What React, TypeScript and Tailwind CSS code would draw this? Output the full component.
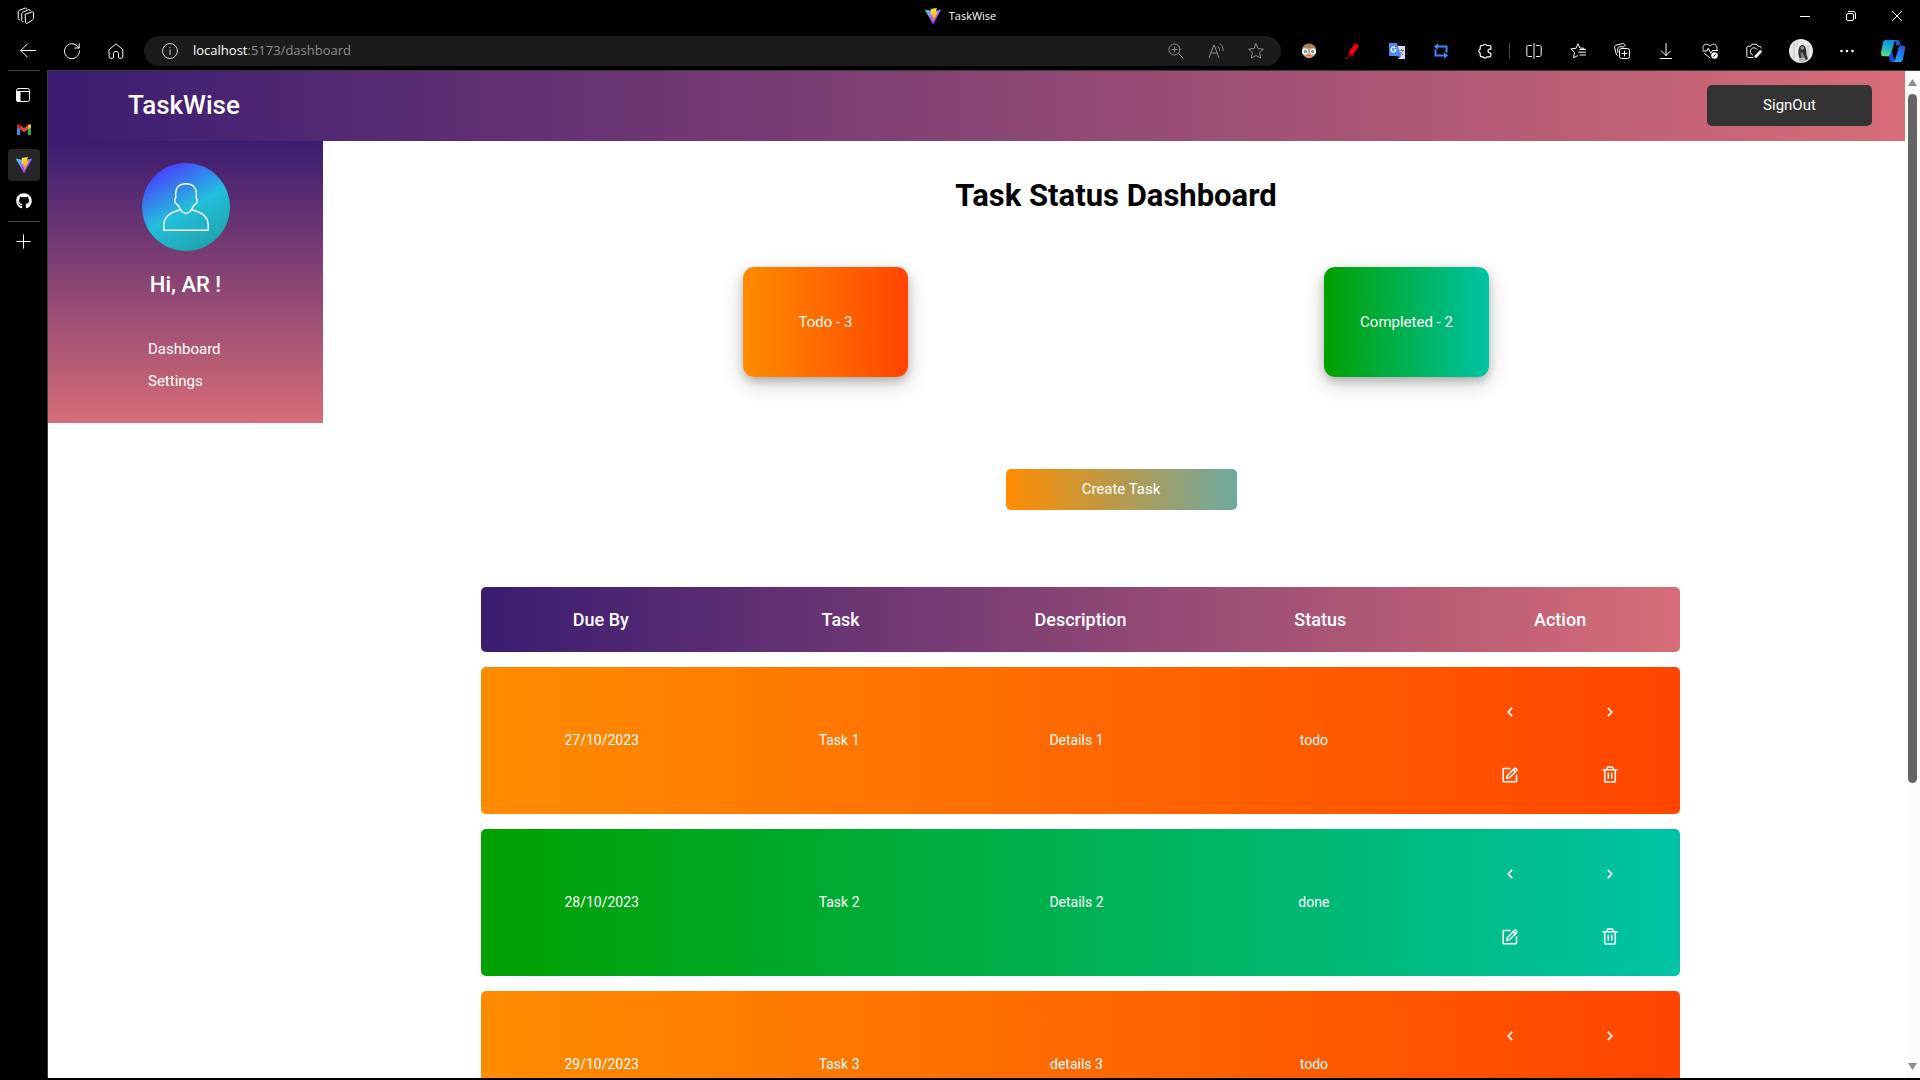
import React from "react";
import type { ReactNode } from "react";
import { FaGithub } from "react-icons/fa";

/* ---------- icons ---------- */

type LineIconProps = { size?: number; children: ReactNode; className?: string; width?: number };

function LineIcon({ size = 16, children, className = "", width = 1 }: LineIconProps) {
  return (
    <svg
      width={size}
      height={size}
      viewBox={`0 0 ${size} ${size}`}
      fill="none"
      stroke="currentColor"
      strokeWidth={width}
      strokeLinecap="round"
      strokeLinejoin="round"
      className={className}
      aria-hidden="true"
    >
      {children}
    </svg>
  );
}

function ViteLogo({ id }: { id: string }) {
  return (
    <svg width="16" height="16" viewBox="0 0 256 257" aria-hidden="true">
      <defs>
        <linearGradient id={`${id}-a`} x1="-.8%" x2="57.6%" y1="7.7%" y2="78.4%">
          <stop offset="0%" stopColor="#41D1FF" />
          <stop offset="100%" stopColor="#BD34FE" />
        </linearGradient>
        <linearGradient id={`${id}-b`} x1="43.4%" x2="50.3%" y1="2.2%" y2="89%">
          <stop offset="0%" stopColor="#FFEA83" />
          <stop offset="8.3%" stopColor="#FFDD35" />
          <stop offset="100%" stopColor="#FFA800" />
        </linearGradient>
      </defs>
      <path
        fill={`url(#${id}-a)`}
        d="M255.153 37.938L134.897 252.976c-2.483 4.44-8.862 4.466-11.382.048L.875 37.958c-2.746-4.814 1.371-10.646 6.827-9.67l120.385 21.517a6.537 6.537 0 0 0 2.322-.004l117.867-21.483c5.438-.991 9.574 4.796 6.877 9.62Z"
      />
      <path
        fill={`url(#${id}-b)`}
        d="M185.432.063L96.44 17.501a3.268 3.268 0 0 0-2.634 3.014l-5.474 92.456a3.268 3.268 0 0 0 3.997 3.378l24.777-5.718c2.318-.535 4.413 1.507 3.936 3.838l-7.361 36.047c-.495 2.426 1.782 4.5 4.151 3.78l15.304-4.649c2.372-.72 4.652 1.36 4.15 3.788l-11.698 56.621c-.732 3.542 3.979 5.473 5.943 2.437l1.313-2.028l72.516-144.72c1.215-2.423-.88-5.186-3.54-4.672l-25.505 4.922c-2.396.462-4.435-1.77-3.759-4.114l16.646-57.705c.677-2.35-1.37-4.583-3.769-4.113Z"
      />
    </svg>
  );
}

function WorkspacesIcon() {
  return (
    <LineIcon size={18}>
      <path d="M8.5 7.2 15 4.9c.8-.3 1.5.2 1.5 1v5.6c0 .6-.3 1.1-.9 1.4l-5.4 3.4c-.8.4-1.7 0-1.7-.9Z" />
      <path d="M6.2 14.8c-.9.1-1.5-.4-1.5-1.2V6.8c0-.7.4-1.3 1-1.6l5.6-2.4c.9-.4 1.8 0 2 .8" />
      <path d="M2.8 12.9c-.9.1-1.6-.4-1.6-1.2V5c0-.7.4-1.3 1-1.6L7.8 1.2c.9-.4 1.8 0 2 .8" />
    </LineIcon>
  );
}

function BackIcon() {
  return (
    <LineIcon>
      <path d="M15.5 7.5H.8M7.3 1 .8 7.5l6.5 6.5" />
    </LineIcon>
  );
}

function RefreshIcon() {
  return (
    <LineIcon>
      <path d="M14.8 5A7.5 7.5 0 1 0 15.5 8M15.2.8V5h-4.4" />
    </LineIcon>
  );
}

function HomeIcon() {
  return (
    <LineIcon>
      <path d="M1.2 6.6 8 .8l6.8 5.8v7.2c0 .9-.5 1.4-1.3 1.4h-2.2c-.5 0-.8-.3-.8-.8v-3.6c0-1.4-1-2.4-2.5-2.4s-2.5 1-2.5 2.4v3.6c0 .5-.3.8-.8.8H2.5c-.8 0-1.3-.5-1.3-1.4Z" />
    </LineIcon>
  );
}

function InfoIcon() {
  return (
    <LineIcon>
      <circle cx="8" cy="8" r="7.5" />
      <path d="M8 7v4.5M8 4.6v.2" />
    </LineIcon>
  );
}

function ZoomIcon() {
  return (
    <LineIcon>
      <circle cx="6.5" cy="6.5" r="5.5" />
      <path d="M10.5 10.5 15 15M6.5 4v5M4 6.5h5" />
    </LineIcon>
  );
}

function ReadAloudIcon() {
  return (
    <LineIcon size={18}>
      <path d="m2 15.5 5-12.5 5 12.5M4 11h6" />
      <path d="M11 4.5c1 .9 1.5 2.2 1.5 3.8M13.5 2c1.8 1.6 2.7 3.8 2.7 6.5" />
    </LineIcon>
  );
}

function StarIcon() {
  return (
    <LineIcon>
      <path d="m8 .8 2.2 4.7 5.2.7-3.8 3.5 1 5.3L8 12.5 3.4 15l1-5.3L.6 6.2l5.2-.7Z" />
    </LineIcon>
  );
}

function FaceIcon() {
  return (
    <svg width="16" height="16" viewBox="0 0 16 16" aria-hidden="true">
      <ellipse cx="8" cy="8" rx="7" ry="7.2" fill="#d9a07c" />
      <path d="M1 7C1 3 4 .7 8 .7S15 3 15 7L12 4.6 8 5.5 4 4.6Z" fill="#a5835b" />
      <circle cx="4" cy="8.5" r="3" fill="#fff" />
      <circle cx="12" cy="8.5" r="3" fill="#fff" />
      <circle cx="4.4" cy="8.5" r="1.8" fill="#5fa3b3" />
      <circle cx="11.6" cy="8.5" r="1.8" fill="#5fa3b3" />
      <path d="M6.5 12.5h3" stroke="#b4585a" strokeWidth="1" />
    </svg>
  );
}

function MarkerIcon() {
  return (
    <svg width="16" height="16" viewBox="0 0 16 16" aria-hidden="true">
      <path d="M10.2.2 14 2.5 7.5 13 3 13.5l.8-4.7Z" fill="#f20000" />
      <path d="m3.8 8.8-.8 3.8 1.6 1L7.5 13 6 10.5Z" fill="#7a0000" />
      <path d="M1.2 14.8h2.4L3 16H1Z" fill="#f20000" />
    </svg>
  );
}

function TranslateIcon() {
  return (
    <svg width="16" height="16" viewBox="0 0 16 16" aria-hidden="true">
      <path d="M7 3h9v13H9.5Z" fill="#dcdcdc" />
      <path d="M10 7.5h5M12.5 6v1.5M14 7.5c-.5 2-1.5 3.5-3.5 4.5M11 9c.8 1.3 1.8 2.3 3.2 3" stroke="#607d8b" strokeWidth=".9" fill="none" />
      <path d="M0 0h7.8L12 13H1a1 1 0 0 1-1-1Z" fill="#4a8af4" />
      <path d="M8.5 13H12l-2.5 3Z" fill="#3a53c5" />
      <path d="M6.2 4.9A2.4 2.4 0 1 0 6.9 6.7H4.6" stroke="#fff" strokeWidth="1.2" fill="none" />
    </svg>
  );
}

function LoopIcon() {
  return (
    <svg width="16" height="16" viewBox="0 0 16 16" fill="none" aria-hidden="true">
      <path d="M4 3.5h9.5v6M12 12.5H2.5v-6" stroke="#3f87f5" strokeWidth="2" />
      <path d="M5 .3v6.4L.8 3.5Z M11 9.3v6.4l4.2-3.2Z" fill="#3f87f5" />
    </svg>
  );
}

function PuzzleIcon() {
  return (
    <LineIcon width={1.2}>
      <path d="M6.2 2.5a2 2 0 0 1 3.7 0h2.6c.9 0 1.4.5 1.4 1.4v2.3h-1a1.9 1.9 0 0 0 0 3.8h1v2.4c0 .9-.5 1.4-1.4 1.4H10a2 2 0 0 1-3.8 0H4.6c-.9 0-1.4-.5-1.4-1.4V10a2 2 0 0 1 0-3.8V3.9c0-.9.5-1.4 1.4-1.4Z" />
    </LineIcon>
  );
}

function SplitIcon() {
  return (
    <LineIcon>
      <path d="M8 .5v15M5.5 2.5h-3C1.500 2.500.8 3.200.8 4.200v7.600c0 1 .7 1.700 1.700 1.700h3M10.500 2.500h3c1 0 1.700.7 1.700 1.700v7.600c0 1-.7 1.700-1.700 1.700h-3" />
    </LineIcon>
  );
}

function FavoritesIcon() {
  return (
    <LineIcon>
      <path d="M14 5.300 9.800 5 8 .8 6 5.300l-5.200.6 3.700 3.500-.9 5.300 3.900-2M10 6.500h5.500M8.800 9.200h6.700M10 12h5.500" />
    </LineIcon>
  );
}

function CollectionsIcon() {
  return (
    <LineIcon>
      <rect x="5.5" y="5.5" width="10" height="10" rx="2" />
      <path d="M10.500 8v5M8 10.500h5M3.300 12.500A2 2 0 0 1 2.200 11L.6 4.300c-.2-1 .4-1.900 1.400-2.100L8.700.6c1-.2 1.900.4 2.100 1.400l.3 1" />
      <path d="M3.800 9.500V5.800c0-1.200.8-2 2-2h4" />
    </LineIcon>
  );
}

function DownloadIcon() {
  return (
    <LineIcon>
      <path d="M8 .5v12M3.500 8 8 12.500 12.500 8M2.500 15.500h11" />
    </LineIcon>
  );
}

function HealthIcon() {
  return (
    <LineIcon>
      <path d="M1.200 6.500C.2 3.500 2 1.200 4.400 1.200c1.500 0 2.800.8 3.600 2 .8-1.200 2.100-2 3.600-2C14 1.200 15.800 3.500 14.800 6.500M.8 8h4l1.500-2.800 2.500 5L10.500 7.500h5M2.500 10.500 8 15" />
      <circle cx="12.5" cy="12.5" r="3.3" fill="white" stroke="none" />
      <path d="m11.500 13.500 2-2" stroke="black" />
    </LineIcon>
  );
}

function ShotIcon() {
  return (
    <LineIcon>
      <path d="M7 14.500H2.500c-1.100 0-1.700-.6-1.700-1.700V5c0-1.100.6-1.700 1.700-1.700h2L6 1.200h4.500l1.500 2.100h1.500c1.100 0 1.700.6 1.700 1.700" />
      <path d="M11.300 6.500A3.800 3.800 0 1 0 6.500 12" />
      <path d="M14.500 8.500 9.800 13.500" strokeWidth="2.600" />
    </LineIcon>
  );
}

function ProfilePhoto() {
  return (
    <svg width="24" height="24" viewBox="0 0 24 24" aria-hidden="true">
      <circle cx="12" cy="12" r="12" fill="#e8e8e8" />
      <path d="M5 4v15M8 2v6M19 6v12" stroke="#c9c9c9" strokeWidth="1.5" />
      <path d="M10 18c-1-5-1-11 3-12 4-.5 4.500 5 4.500 10L19 20l-6 3Z" fill="#2c2c2e" />
      <circle cx="13.3" cy="9" r="1.8" fill="#9b9b9b" />
      <path d="m11.500 13 2.500 1 2 5-4 1Z" fill="#77777c" />
      <path d="m9 20 6-2 2 3-5 3Z" fill="#b8b8b8" />
    </svg>
  );
}

function CopilotIcon() {
  return (
    <svg width="26" height="24" viewBox="0 0 26 24" aria-hidden="true">
      <defs>
        <linearGradient id="cp-left" x1="0.6" y1="0" x2="0.3" y2="1">
          <stop offset="0%" stopColor="#0f8fe0" />
          <stop offset="50%" stopColor="#19b5c4" />
          <stop offset="100%" stopColor="#5fe08a" />
        </linearGradient>
        <linearGradient id="cp-right" x1="0.7" y1="0" x2="0.2" y2="1">
          <stop offset="0%" stopColor="#2657dd" />
          <stop offset="60%" stopColor="#1b8cf2" />
          <stop offset="100%" stopColor="#27b4f5" />
        </linearGradient>
      </defs>
      <path d="M15 1h2.500c1.500 0 2 .7 2.400 2l1 3.500h-4.500Z" fill="#1560b8" />
      <path d="M5.500 1H17c-1.600 0-2.300.8-2.800 2.400L11 14.500c-.5 1.800-1.500 2.800-3.300 2.800H3.500C1.500 17.300.6 15.500 1 13.500L3 3.700C3.400 2 4 1 5.500 1Z" fill="url(#cp-left)" />
      <path d="M7 17.300c1.500 0 2.200 1 2.600 2.600.5 2 1 3.100 2.600 3.100h3L12 12.500l-1.600 3.600c-.7.9-1.800 1.200-3.400 1.200Z" fill="#2348d6" />
      <path d="M20.500 23h-8c1.600 0 2.300-.8 2.800-2.400L18.400 9.400c.5-1.800 1.400-2.800 3.200-2.800h1.200c2 0 2.600 1.700 2.200 3.700l-2 9.700c-.4 1.700-.9 3-2.500 3Z" fill="url(#cp-right)" />
    </svg>
  );
}

function TabPaneIcon() {
  return (
    <LineIcon size={14}>
      <rect x=".5" y=".5" width="13" height="13" rx="2" />
      <path d="M.5 3.500h13" />
      <path d="M.5 3.500H4v10H2a1.500 1.500 0 0 1-1.500-1.500Z" fill="currentColor" />
    </LineIcon>
  );
}

function GmailIcon() {
  return (
    <svg width="14" height="11" viewBox="0 0 14 11" aria-hidden="true">
      <path d="M0 2v8a1 1 0 0 0 1 1h2.200V4.500Z" fill="#4285f4" />
      <path d="M14 2v8a1 1 0 0 1-1 1h-2.200V4.500Z" fill="#34a853" />
      <path d="M3.200 1.300v4.300L7 8.300l3.800-2.700V1.300L7 4.100Z" fill="#ea4335" />
      <path d="M0 1.600v1.700l3.200 2.300V1.300L2.500.7C1.400-.1 0 .5 0 1.600Z" fill="#c5221f" />
      <path d="M14 1.600v1.700l-3.200 2.300V1.300l.7-.6c1.100-.8 2.500-.2 2.500.9Z" fill="#fbbc04" />
    </svg>
  );
}

function UserAvatar() {
  return (
    <svg width="88" height="88" viewBox="0 0 88 88" role="img" aria-label="User avatar">
      <defs>
        <linearGradient id="avatar" x1="0.24" y1="0.03" x2="0.76" y2="0.97">
          <stop offset="0%" stopColor="#4a3cff" />
          <stop offset="52%" stopColor="#22bfdc" />
          <stop offset="100%" stopColor="#1fa3ab" />
        </linearGradient>
      </defs>
      <circle cx="44" cy="44" r="44" fill="url(#avatar)" />
      <g fill="none" stroke="#fff" strokeWidth="1.4" strokeLinejoin="round">
        <path d="M44 20.700c-6.500 0-10.300 4-10.300 9.300 0 1.800.1 3.200.2 4.200-1.600 1.600-1.500 4.900.2 6.600 1.200 1 2.300 1.400 3.200 3.500C38.800 47.700 41 50.400 44 50.400s5.200-2.700 6.700-6.100c.9-2.100 2-2.500 3.200-3.500 1.700-1.700 1.800-5 .2-6.600.1-1 .2-2.400.2-4.200 0-5.300-3.800-9.300-10.300-9.300Z" />
        <path d="M38.700 46.800C29 49 21.800 54 21.800 62v5.300h44.400V62c0-8-7.200-13-16.900-15.200" />
      </g>
    </svg>
  );
}

function EditIcon() {
  return (
    <svg width="16" height="16" viewBox="0 0 16 16" fill="none" stroke="currentColor" strokeWidth="1.5" strokeLinejoin="round" strokeLinecap="round" aria-hidden="true">
      <path d="M8 1.500H1.800a.6.6 0 0 0-.6.6v12.100c0 .3.300.6.6.6h12.100c.3 0 .6-.3.6-.6V8" />
      <path d="M4.700 11.300 5.300 8.700 12.300 1.500c.5-.5 1.200-.5 1.700 0l.5.5c.5.500.5 1.200 0 1.700L7.400 10.800Z" />
      <path d="m11.300 2.600 2.100 2.100" />
    </svg>
  );
}

function TrashIcon() {
  return (
    <svg width="16" height="17" viewBox="0 0 16 17" fill="none" stroke="currentColor" strokeWidth="1.5" strokeLinejoin="round" aria-hidden="true">
      <path d="M.5 3.800h15M4.700 3.600 5.300 1.500c.1-.4.4-.6.800-.6h3.800c.4 0 .7.200.8.600l.6 2.100" />
      <path d="M2.700 3.800v11.500c0 .4.300.7.700.7h9.200c.4 0 .7-.3.700-.7V3.800M6.300 6.800v6M9.700 6.800v6" />
    </svg>
  );
}

function Chevron({ flip = false }: { flip?: boolean }) {
  return (
    <svg width="6" height="10" viewBox="0 0 6 10" fill="none" stroke="currentColor" strokeWidth="1.7" className={flip ? "-scale-x-100" : ""} aria-hidden="true">
      <path d="M5.200.8 1.200 5l4 4.200" />
    </svg>
  );
}

/* ---------- browser frame ---------- */

function ToolButton({ label, children, className = "w-11" }: { label: string; children: ReactNode; className?: string }) {
  return (
    <button type="button" aria-label={label} className={`flex h-full shrink-0 items-center justify-center ${className}`}>
      {children}
    </button>
  );
}

function TitleBar() {
  return (
    <div className="flex h-8 shrink-0 items-center">
      <div className="flex flex-1 pl-[17px]">
        <button type="button" aria-label="Workspaces">
          <WorkspacesIcon />
        </button>
      </div>
      <div className="mr-4 flex items-center gap-2 font-['Open_Sans',sans-serif] text-[11px]">
        <ViteLogo id="title" />
        <span>TaskWise</span>
      </div>
      <div className="flex h-full flex-1 justify-end">
        <ToolButton label="Minimize" className="w-[46px]">
          <LineIcon size={10}><path d="M0 5.500h10" /></LineIcon>
        </ToolButton>
        <ToolButton label="Restore" className="w-[46px]">
          <LineIcon size={10}>
            <rect x=".5" y="2.5" width="7" height="7" rx="1.5" />
            <path d="M2.500.5H7c1.500 0 2.500 1 2.500 2.500v4.500" />
          </LineIcon>
        </ToolButton>
        <ToolButton label="Close" className="w-[46px]">
          <LineIcon size={10}><path d="m.3.300 9.400 9.400M9.700.3.300 9.700" /></LineIcon>
        </ToolButton>
      </div>
    </div>
  );
}

function Toolbar() {
  return (
    <div className="flex h-[38px] shrink-0 items-center pl-1.5 pr-0.5">
      <ToolButton label="Back"><BackIcon /></ToolButton>
      <ToolButton label="Refresh"><RefreshIcon /></ToolButton>
      <ToolButton label="Home"><HomeIcon /></ToolButton>
      <div className="mx-1.5 flex h-[30px] flex-1 items-center rounded-full bg-[#1b1b1b] pl-[18px] pr-[5px]">
        <button type="button" aria-label="Site information" className="text-[#d0d0d0]">
          <InfoIcon />
        </button>
        <a href="#dashboard" className="ml-[15px] flex-1 font-['Open_Sans',sans-serif] text-[13px] text-[#8f8f8f]">
          <span className="text-white">localhost</span>:5173/dashboard
        </a>
        <div className="flex h-full text-[#8f8f8f]">
          <ToolButton label="Zoom" className="w-10"><ZoomIcon /></ToolButton>
          <ToolButton label="Read aloud" className="w-10"><ReadAloudIcon /></ToolButton>
          <ToolButton label="Add to favorites" className="w-10"><StarIcon /></ToolButton>
        </div>
      </div>
      <ToolButton label="Profile helper extension"><FaceIcon /></ToolButton>
      <ToolButton label="Marker extension"><MarkerIcon /></ToolButton>
      <ToolButton label="Translate extension"><TranslateIcon /></ToolButton>
      <ToolButton label="Loop extension"><LoopIcon /></ToolButton>
      <ToolButton label="Extensions"><PuzzleIcon /></ToolButton>
      <div className="mx-0.5 h-4 w-px shrink-0 bg-[#4a4a4a]" />
      <ToolButton label="Split screen"><SplitIcon /></ToolButton>
      <ToolButton label="Favorites"><FavoritesIcon /></ToolButton>
      <ToolButton label="Collections"><CollectionsIcon /></ToolButton>
      <ToolButton label="Downloads"><DownloadIcon /></ToolButton>
      <ToolButton label="Browser essentials"><HealthIcon /></ToolButton>
      <ToolButton label="Screenshot"><ShotIcon /></ToolButton>
      <ToolButton label="Profile" className="w-[50px]"><ProfilePhoto /></ToolButton>
      <ToolButton label="Settings and more" className="w-[42px]">
        <svg width="14" height="4" viewBox="0 0 14 4" fill="white" aria-hidden="true">
          <circle cx="1.5" cy="2" r="1.3" /><circle cx="7" cy="2" r="1.3" /><circle cx="12.5" cy="2" r="1.3" />
        </svg>
      </ToolButton>
      <ToolButton label="Copilot" className="w-[50px]"><CopilotIcon /></ToolButton>
    </div>
  );
}

function TabRail() {
  return (
    <div className="flex w-[47px] shrink-0 flex-col gap-1 pl-2 pr-[7px]">
      <div className="-mb-1 h-px shrink-0 bg-[#4a4a4a]" />
      <ToolButton label="Tab actions" className="mt-2 -mb-0.5 max-h-8 w-[30px]"><TabPaneIcon /></ToolButton>
      <ToolButton label="Gmail" className="max-h-8 w-8"><GmailIcon /></ToolButton>
      <ToolButton label="TaskWise tab" className="max-h-8 w-8 rounded bg-[#262626]"><ViteLogo id="rail" /></ToolButton>
      <ToolButton label="GitHub" className="max-h-8 w-8"><FaGithub size={16} /></ToolButton>
      <div className="h-px shrink-0 bg-[#4a4a4a]" />
      <ToolButton label="New tab" className="max-h-[30px] w-[31px]">
        <LineIcon size={15}><path d="M7.500.8v13.400M.8 7.500h13.400" /></LineIcon>
      </ToolButton>
    </div>
  );
}

function Scrollbar() {
  return (
    <div className="flex w-[15px] shrink-0 flex-col items-center bg-[#fcfcfc] pb-2 pt-2" aria-hidden="true">
      <svg width="9" height="7" viewBox="0 0 9 7" fill="#8b8b8b"><path d="M4.500 0 9 7H0Z" /></svg>
      <div className="my-2 flex-1">
        <div className="h-[71.7%] w-[9px] rounded-full bg-[#646464]" />
      </div>
      <svg width="9" height="7" viewBox="0 0 9 7" fill="#8b8b8b"><path d="M4.500 7 9 0H0Z" /></svg>
    </div>
  );
}

/* ---------- TaskWise page ---------- */

type Task = { due: string; name: string; details: string; status: "todo" | "done" };

const tasks: Task[] = [
  { due: "27/10/2023", name: "Task 1", details: "Details 1", status: "todo" },
  { due: "28/10/2023", name: "Task 2", details: "Details 2", status: "done" },
  { due: "29/10/2023", name: "Task 3", details: "details 3", status: "todo" },
];

const columns = ["Due By", "Task", "Description", "Status", "Action"];

const rowColor = {
  todo: "from-[#ff8c00] to-[#ff4500]",
  done: "from-[#00a000] to-[#00c3a5]",
};

function Header() {
  return (
    <header className="flex h-[70px] items-center justify-between bg-linear-to-r/srgb from-[#3a1c71] to-[#d76d77] pb-0.5 pl-20 pr-[33px]">
      <a href="#home" className="text-[26px] font-medium">TaskWise</a>
      <button type="button" className="h-[41px] w-[165px] rounded-[5px] bg-[#333333] text-[15px]">SignOut</button>
    </header>
  );
}

function Sidebar() {
  return (
    <aside className="flex w-[275px] shrink-0 flex-col items-center bg-linear-to-b/srgb from-[#3a1c71] to-[#d76d77] pb-[26px] pt-[22px]">
      <UserAvatar />
      <h2 className="mt-5 text-[22px] font-medium leading-7">Hi, AR !</h2>
      <nav className="mt-[34px] flex w-[75px] flex-col text-[15px] leading-8">
        <a href="#dashboard">Dashboard</a>
        <a href="#settings">Settings</a>
      </nav>
    </aside>
  );
}

function StatCard({ text, color }: { text: string; color: string }) {
  return (
    <div className={`flex h-[110px] w-[165px] items-center justify-center rounded-[11px] bg-linear-to-r/srgb text-[15px] shadow-[0_4px_9px_rgba(0,0,0,0.2),0_7px_22px_rgba(0,0,0,0.19)] ${color}`}>
      {text}
    </div>
  );
}

function TaskRow({ task }: { task: Task }) {
  const action = "flex h-[63px] items-center justify-center";
  return (
    <tr className={`flex items-center rounded-[5px] bg-linear-to-r/srgb pl-0.5 pr-2.5 text-center text-[14px] ${rowColor[task.status]}`}>
      <td className="w-1/5">{task.due}</td>
      <td className="w-1/5">{task.name}</td>
      <td className="w-1/5">{task.details}</td>
      <td className="w-1/5">{task.status}</td>
      <td className="grid w-1/5 grid-cols-[100px_100px] justify-end pb-2 pr-2.5 pt-[13px]">
        <button type="button" aria-label="Move back" className={action}><Chevron /></button>
        <button type="button" aria-label="Move forward" className={action}><Chevron flip /></button>
        <button type="button" aria-label="Edit task" className={action}><EditIcon /></button>
        <button type="button" aria-label="Delete task" className={action}><TrashIcon /></button>
      </td>
    </tr>
  );
}

function Dashboard() {
  return (
    <main className="min-w-0 flex-1 pl-1 pt-[37px]">
      <h1 className="text-center text-[31px] font-bold leading-9 text-black">Task Status Dashboard</h1>
      <div className="mt-[53px] flex justify-around px-[208px]">
        <StatCard text="Todo - 3" color="from-[#ff8c00] to-[#ff4500]" />
        <StatCard text="Completed - 2" color="from-[#00a000] to-[#00c3a5]" />
      </div>
      <div className="mt-[92px] flex justify-center pl-2.5">
        <button type="button" className="h-[41px] w-[231px] rounded-[5px] bg-linear-to-r/srgb from-[#ff8c00] to-[#6ea9a0] text-[15px]">
          Create Task
        </button>
      </div>
      <div className="ml-[154px] mr-[225px] mt-[77px]">
        <table className="block">
          <thead className="block">
            <tr className="flex rounded-[5px] bg-linear-to-r/srgb from-[#3a1c71] to-[#d76d77] text-[18px]">
              {columns.map((c) => (
                <th key={c} scope="col" className="w-1/5 text-center font-medium leading-[65px]">{c}</th>
              ))}
            </tr>
          </thead>
          <tbody className="mt-[15px] flex flex-col gap-[15px]">
            {tasks.map((t) => (
              <TaskRow key={t.name} task={t} />
            ))}
          </tbody>
        </table>
      </div>
    </main>
  );
}

export default function App() {
  return (
    <div className="flex h-screen flex-col overflow-hidden bg-black pb-0.5 font-['Roboto',sans-serif] text-white">
      <TitleBar />
      <Toolbar />
      <div className="flex min-h-0 flex-1">
        <TabRail />
        <div className="flex min-w-0 flex-1 border-l border-t border-[#3b3b3b] bg-white">
          <div className="min-w-0 flex-1 overflow-hidden">
            <Header />
            <div className="flex items-start">
              <Sidebar />
              <Dashboard />
            </div>
          </div>
          <Scrollbar />
        </div>
      </div>
    </div>
  );
}
